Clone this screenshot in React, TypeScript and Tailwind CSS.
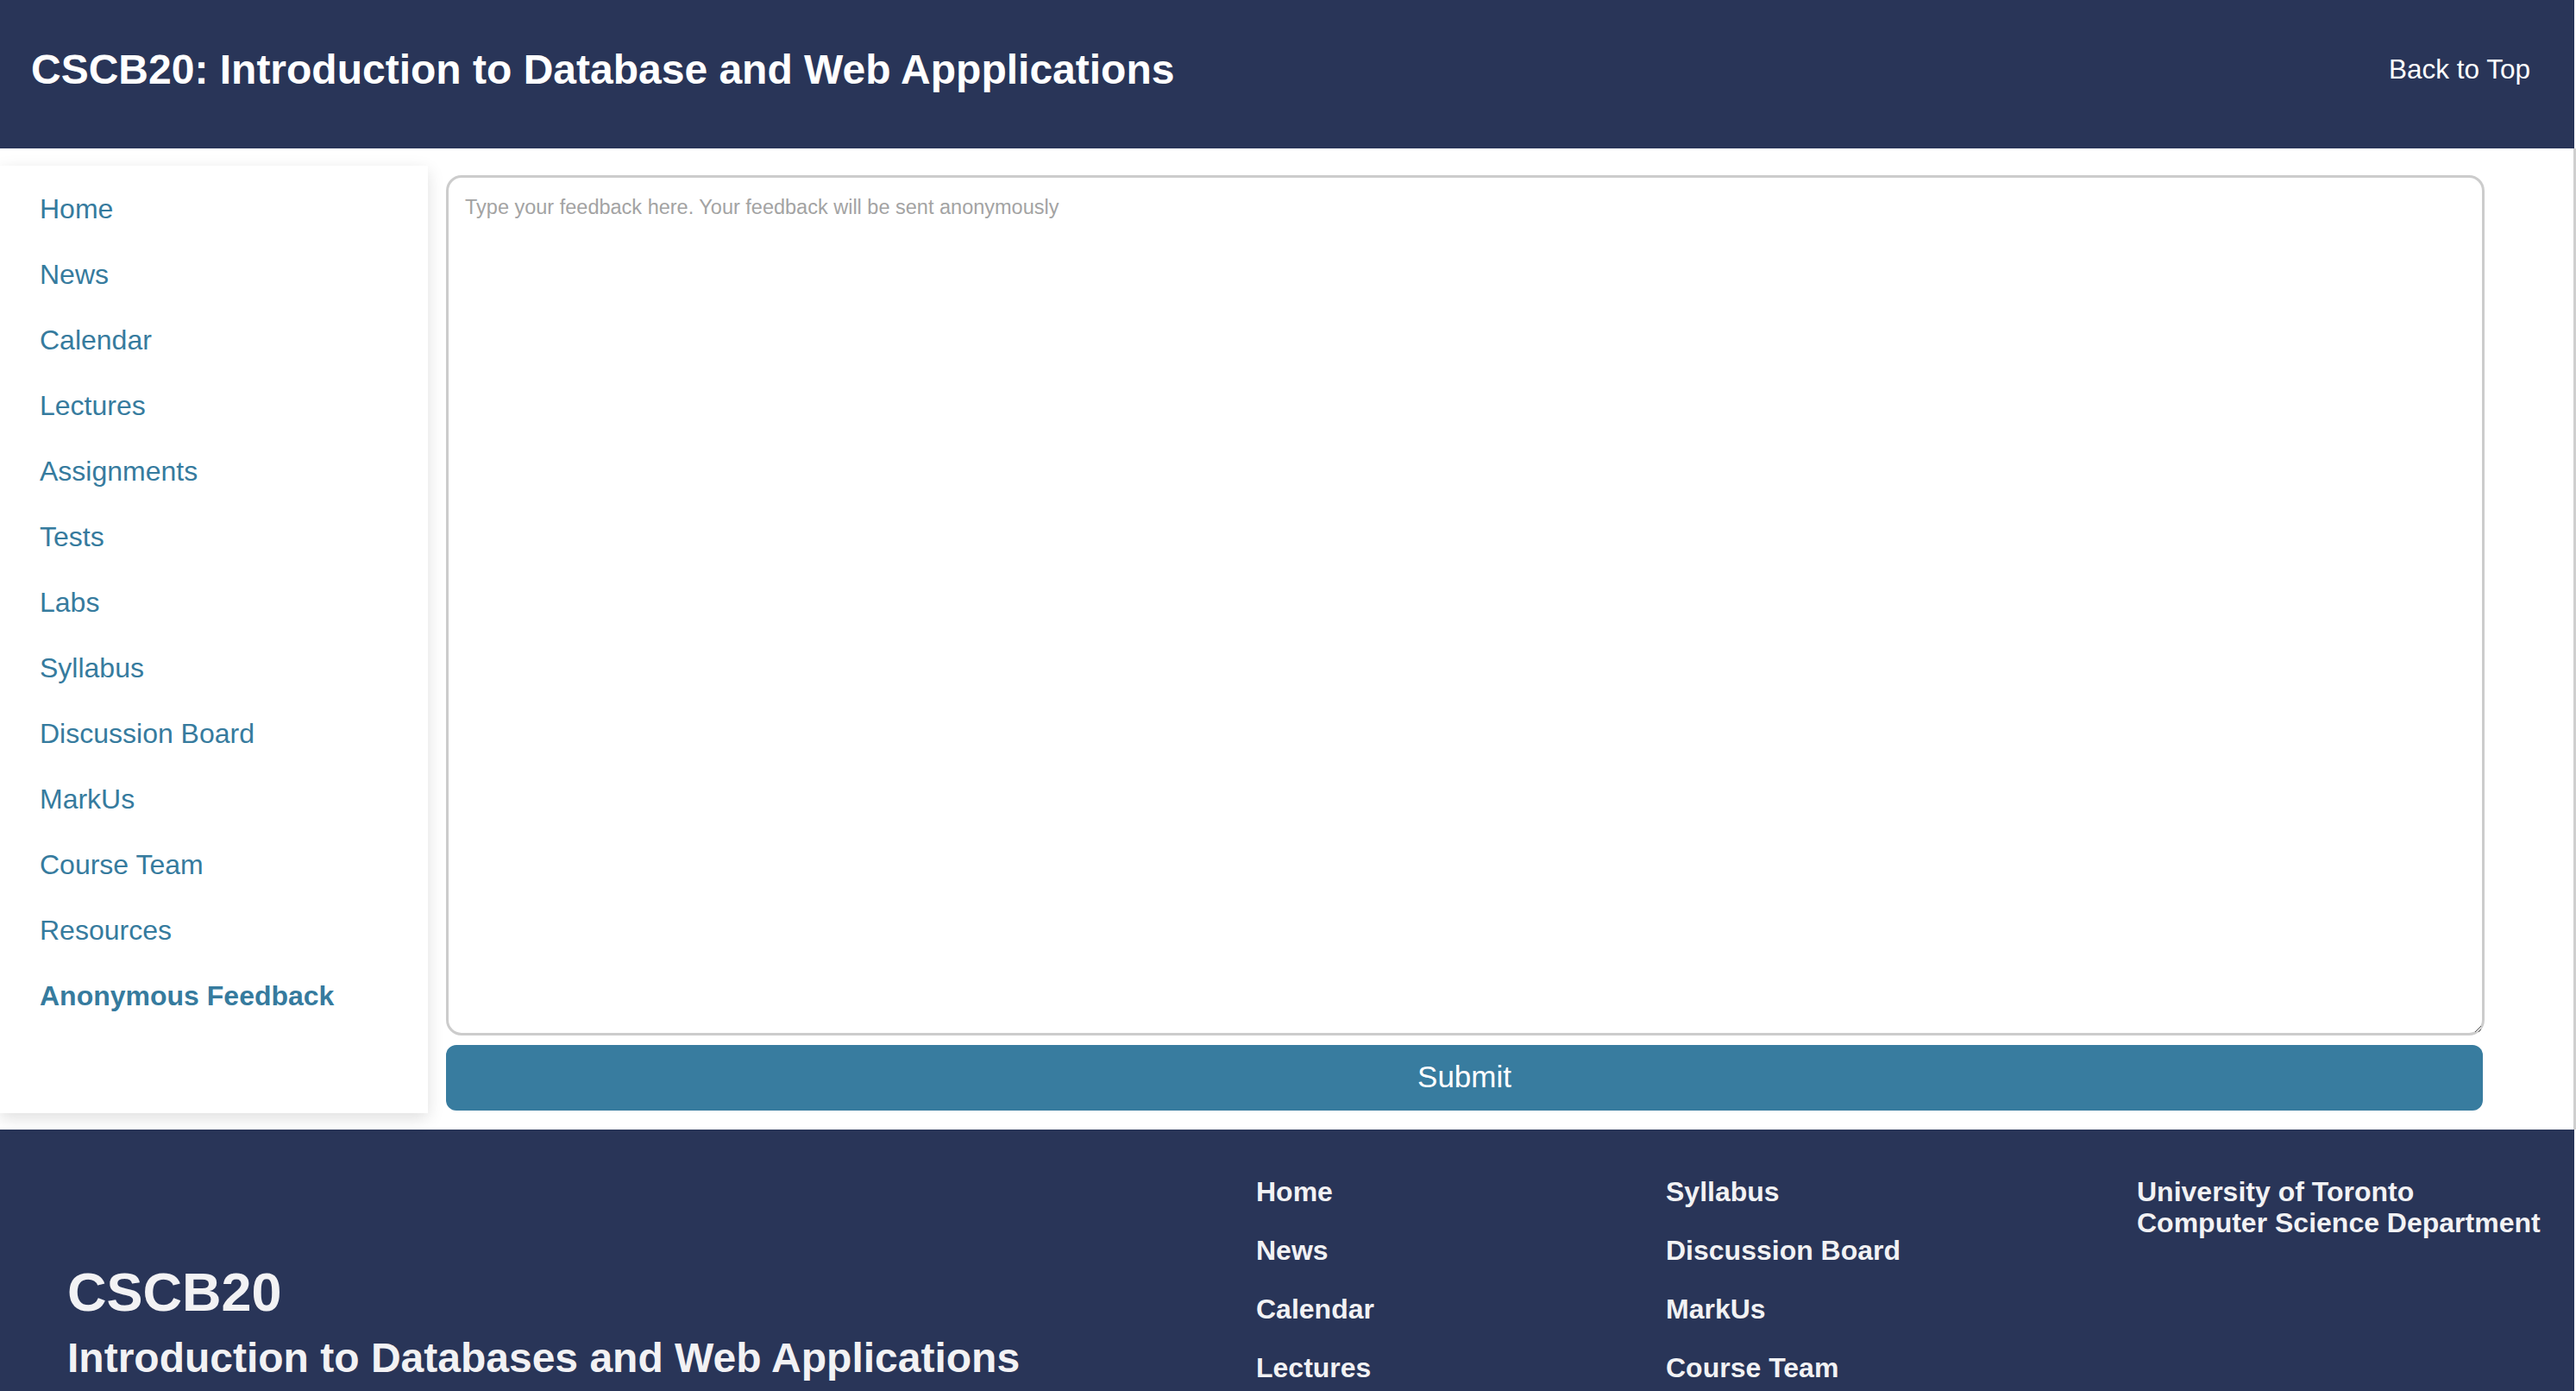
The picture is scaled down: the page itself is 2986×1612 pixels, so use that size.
const sideLinks = [
  "Home",
  "News",
  "Calendar",
  "Lectures",
  "Assignments",
  "Tests",
  "Labs",
  "Syllabus",
  "Discussion Board",
  "MarkUs",
  "Course Team",
  "Resources",
];

const footerCol1 = ["Home", "News", "Calendar", "Lectures", "Assignments", "Tests", "Labs"];
const footerCol2 = ["Syllabus", "Discussion Board", "MarkUs", "Course Team", "Resources", "Anonymous Feedback"];

export default function App() {
  return (
    <div
      className="h-[1612px] w-[2986px] overflow-hidden bg-white"
      style={{ fontFamily: '"Liberation Sans", Arial, sans-serif' }}
    >
      {/* header */}
      <header className="flex h-[172px] w-[2984px] items-center justify-between bg-[#293558] pb-[12px] pl-[36px] pr-[51px] text-white">
        <h1 className="text-[48px] font-bold leading-[55px]">
          CSCB20: Introduction to Database and Web Appplications
        </h1>
        <a href="#" className="text-[31.5px] leading-[36px]">
          Back to Top
        </a>
      </header>

      {/* body */}
      <div className="flex w-[2986px] border-r-[3px] border-[#cfcfcf] pt-[20px] pb-[19px]">
        <nav className="flex h-[1098px] w-[496px] flex-col gap-[40px] bg-white pl-[46px] pt-[32px] shadow-[0_6px_18px_rgba(0,0,0,0.13)]">
          {sideLinks.map((l) => (
            <a key={l} href="#" className="text-[32px] leading-[36px] text-[#367b9e]">
              {l}
            </a>
          ))}
          <a href="#" className="text-[32px] font-bold leading-[36px] text-[#367b9e]">
            Anonymous Feedback
          </a>
        </nav>

        <div className="ml-[21px] mt-[11px] flex w-[2363px] flex-col">
          <textarea
            placeholder="Type your feedback here. Your feedback will be sent anonymously"
            className="h-[997px] w-full rounded-[18px] border-[3px] border-[#cccccc] px-[19px] py-[20px] text-[23.5px] leading-[28px] text-[#333] outline-none placeholder:text-[#a3a3a3]"
          />
          <button className="mt-[11px] h-[76px] w-[2361px] rounded-[12px] bg-[#387c9f] pb-[2px] text-[35px] text-white">
            Submit
          </button>
        </div>
      </div>

      {/* footer */}
      <footer className="flex w-[2984px] bg-[#293558] pl-[78px] pt-[54px] pb-[80px] text-[#f2f2f4]">
        <div className="w-[1378px] pt-[97px]">
          <div className="text-[63px] font-bold leading-[74px]">CSCB20</div>
          <div className="mt-[12px] text-[48px] font-bold leading-[55px]">
            Introduction to Databases and Web Applications
          </div>
        </div>
        <div className="grid grid-cols-[475px_546px]">
          <div className="flex flex-col gap-[32px]">
            {footerCol1.map((l) => (
              <a key={l} href="#" className="text-[32px] font-bold leading-[36px]">
                {l}
              </a>
            ))}
          </div>
          <div className="flex flex-col gap-[32px]">
            {footerCol2.map((l) => (
              <a key={l} href="#" className="text-[32px] font-bold leading-[36px]">
                {l}
              </a>
            ))}
          </div>
        </div>
        <div className="text-[32px] font-bold leading-[36px]">
          <div>University of Toronto</div>
          <div>Computer Science Department</div>
        </div>
      </footer>
    </div>
  );
}
